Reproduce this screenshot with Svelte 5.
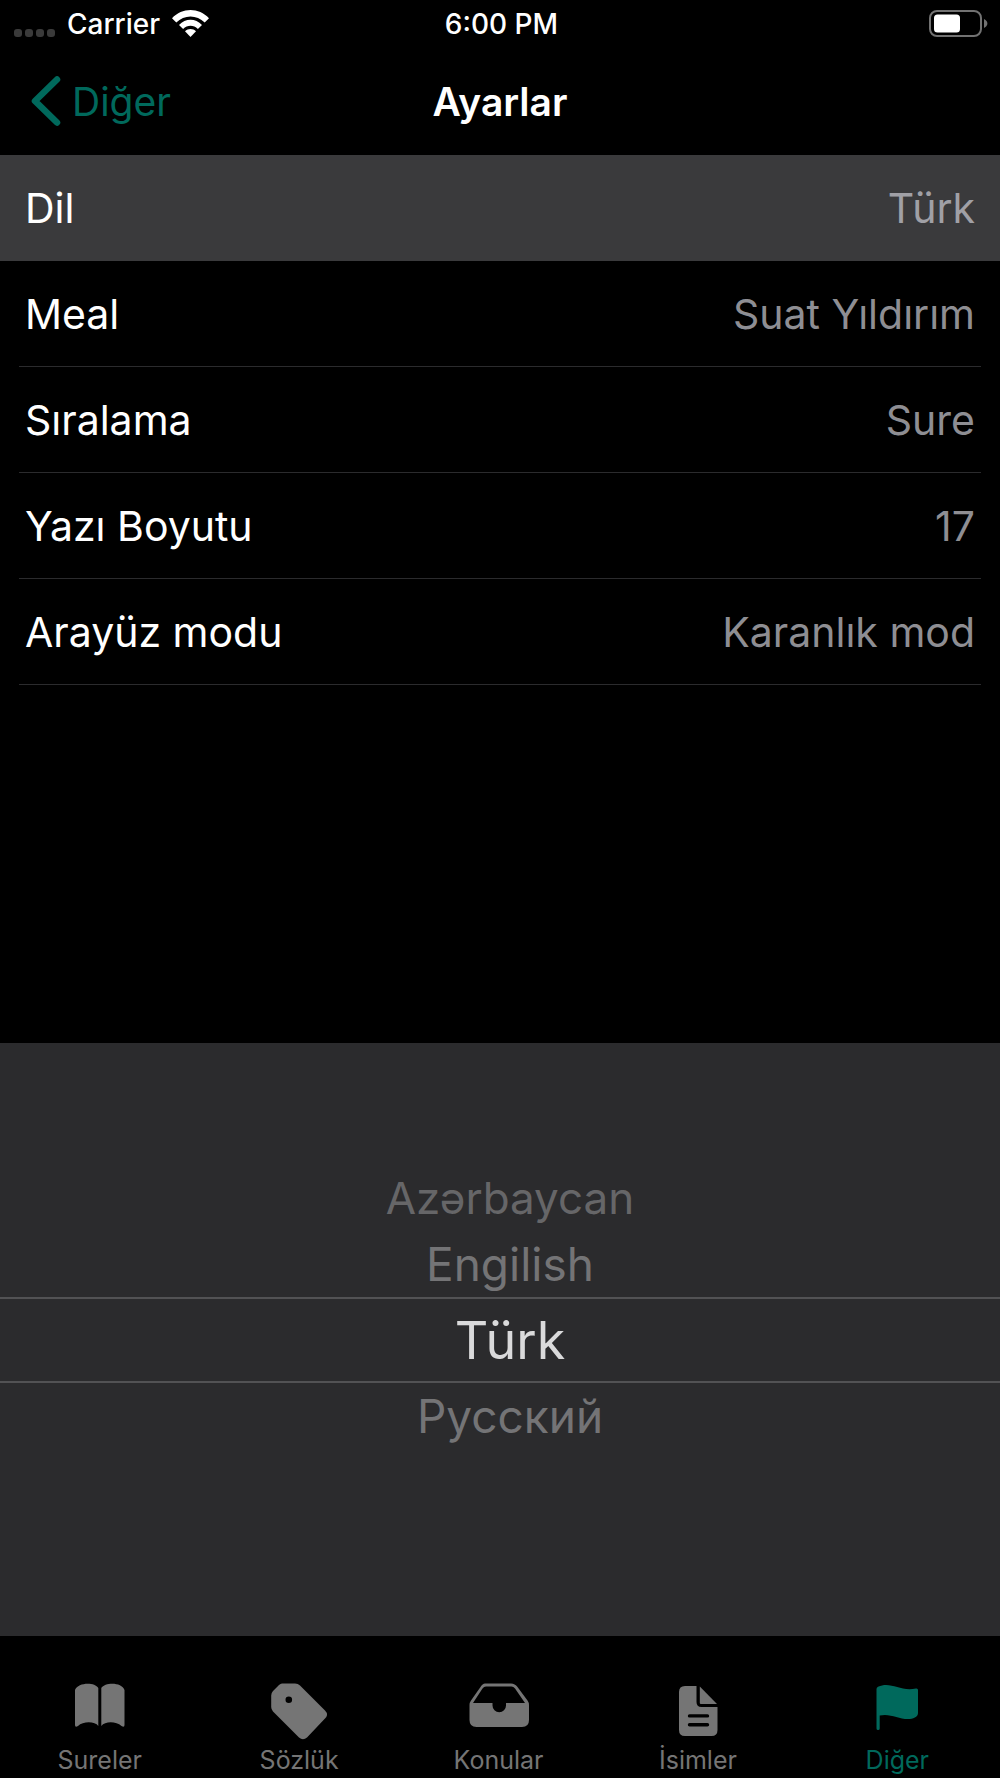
<script lang="ts">
  const languages = ['Azərbaycan', 'Engilish', 'Türk', 'Русский'];
  const tabs = ['Sureler', 'Sözlük', 'Konular', 'İsimler', 'Diğer'];

  let language = $state(2);
  let activeRow = $state(0);
  let activeTab = $state(4);

  let settings = $derived([
    {label: 'Dil', value: languages[language]},
    {label: 'Meal', value: 'Suat Yıldırım'},
    {label: 'Sıralama', value: 'Sure'},
    {label: 'Yazı Boyutu', value: '17'},
    {label: 'Arayüz modu', value: 'Karanlık mod'}
  ]);
</script>

<div class="screen">
  <div class="status-bar">
    <div class="carrier">
      <span class="signal"><i></i><i></i><i></i><i></i></span>
      <span>Carrier</span>
      <svg width="37" height="27" viewBox="0 0 37 27" aria-hidden="true">
        <path d="M0 8.3C10-2.7 27-2.7 37 8.3L32.7 12.6C24.8 4.5 12.2 4.5 4.3 12.6Z" />
        <path d="M7 15C13.5 8 23.5 8 30 15L25.9 18.9C21.6 14.7 15.4 14.7 11.1 18.9Z" />
        <path d="M13 21.3C16 18.2 21 18.2 24 21.3L18.5 27Z" />
      </svg>
    </div>
    <span class="time">6:00 PM</span>
    <svg class="battery" width="60" height="27" viewBox="0 0 60 27" aria-hidden="true">
      <rect x="1" y="1" width="51" height="25" rx="7" fill="none" stroke="#727272" stroke-width="2" />
      <rect x="5" y="4.5" width="26" height="18" rx="3.5" />
      <path d="M55 9C59.5 11 59.5 16 55 18Z" fill="#727272" />
    </svg>
  </div>

  <header>
    <a class="back" href="#more">
      <svg width="31" height="50" viewBox="0 0 31 50" aria-hidden="true">
        <path
          d="M27 3.5 5 25 27 46.5"
          fill="none"
          stroke="currentColor"
          stroke-width="6.5"
          stroke-linecap="round"
          stroke-linejoin="round" />
      </svg>
      <span>Diğer</span>
    </a>
    <h1>Ayarlar</h1>
  </header>

  <main>
    {#each settings as row, index}
      <button
        class="row"
        class:selected={index === activeRow}
        onclick={() => (activeRow = index)}>
        <span class="row-content">
          <span>{row.label}</span>
          <span class="value">{row.value}</span>
        </span>
      </button>
    {/each}
  </main>

  <div class="picker" role="listbox" aria-label="Dil">
    {#each languages as name, index}
      <button
        class="option"
        class:current={index === language}
        class:far={Math.abs(index - language) > 1}
        role="option"
        aria-selected={index === language}
        onclick={() => (language = index)}>
        {name}
      </button>
    {/each}
  </div>

  <nav>
    {#each tabs as tab, index}
      <button
        class="tab"
        class:active={index === activeTab}
        onclick={() => (activeTab = index)}>
        <svg width="64" height="60" viewBox="0 0 64 60" aria-hidden="true">
          {#if index === 0}
            <path d="M7 8C10 0 27 0 30.3 6V44C27 39 15 39 10 44Q7 46 7 43Z" />
            <path d="M33.3 6C37 0 54 0 56.5 8V43Q56.5 46 53.5 44C48 39 37 39 33.3 44Z" />
          {:else if index === 1}
            <path
              fill-rule="evenodd"
              d="M15 1.5H28Q31 1.5 33 3.5L58 28.5Q62 32.5 58 36.5L40 55.5Q36 59 32 55.5L6 29.5Q4.2 27.5 4.2 25V13.5Q4.2 11 6 9L12 3Q13.500 1.5 15 1.5ZM21.8 14.5A3.3 3.3 0 1 0 21.8 21.1 3.3 3.3 0 1 0 21.8 14.5Z" />
          {:else if index === 2}
            <path
              fill-rule="evenodd"
              d="M18 1.5H44Q48 1.5 50.5 5L60.5 18.5Q62 20.5 62 23V38Q62 45 55 45H9.5Q2.5 45 2.5 38V23Q2.5 20.5 4 18.5L13.5 5Q15.5 1.5 18 1.5ZM19 4.5Q16.8 4.5 15.5 6.5L6 21H25.5V23.5A6.7 6.7 0 0 0 39 23.5V21H58L48 6.500Q46.5 4.5 44.5 4.5Z" />
          {:else if index === 3}
            <path
              fill-rule="evenodd"
              d="M19 4H30.5V20Q30.5 25 35.5 25H51.5V48Q51.5 54 45.5 54H19Q13 54 13 48V10Q13 4 19 4ZM23.5 32.2A1.7 1.7 0 0 0 23.5 35.6H41.5A1.7 1.7 0 0 0 41.5 32.2ZM23.5 41A1.7 1.7 0 0 0 23.5 44.4H41.5A1.7 1.7 0 0 0 41.5 41Z" />
            <path d="M33.8 4.5 51 22H34.8Q33.8 22 33.8 21Z" />
          {:else}
            <path
              d="M11.5 7Q11.5 5.5 13 4.8C26-1 35 10 51 6.5Q53 6.2 53 8V31C53 35 48 37 43 37C33 37 25 31 14.7 33.5V46.5A1.6 1.6 0 0 1 11.5 46.5Z" />
          {/if}
        </svg>
        <span>{tab}</span>
      </button>
    {/each}
  </nav>
</div>

<style>
  :global(body) {
    background: #000;
    margin: 0;
  }

  .screen {
    --green: #00695c;
    --gray: #8e8e93;
    --tab-gray: #757575;
    --panel: #2b2b2d;

    display: flex;
    flex-direction: column;
    min-height: 100vh;

    background: #000;
    color: #fff;
    font-family: Inter, 'Liberation Sans', sans-serif;
  }

  button {
    background: none;
    border: none;
    color: inherit;
    font: inherit;
    margin: 0;
    padding: 0;
  }

  svg {
    display: block;
    fill: currentColor;
  }

  .status-bar {
    display: grid;
    grid-template-columns: 1fr auto 1fr;
    align-items: center;

    box-sizing: border-box;
    font-size: 28px;
    font-weight: 500;
    height: 47px;
    padding: 0 11px 0 14px;
  }

  .carrier {
    display: flex;
    align-items: center;
    gap: 12px;
  }

  .signal {
    display: flex;
    gap: 3px;
    padding-top: 18px;
  }

  .signal i {
    background: #3a3a3a;
    border-radius: 3px;
    height: 8px;
    width: 8px;
  }

  .battery {
    justify-self: end;
  }

  header {
    display: grid;
    grid-template-columns: 1fr auto 1fr;
    align-items: center;

    height: 108px;
    padding: 0 30px;
  }

  .back {
    display: flex;
    align-items: center;
    gap: 11px;

    color: var(--green);
    font-size: 39px;
    text-decoration: none;
  }

  h1 {
    font-size: 39px;
    font-weight: 600;
    margin: 0;
  }

  main {
    flex: 1;
  }

  .row {
    display: block;
    font-size: 41px;
    height: 106px;
    padding: 0 19px;
    text-align: left;
    width: 100%;
  }

  .row-content {
    display: flex;
    align-items: center;
    justify-content: space-between;

    border-bottom: 1px solid #2b2b2d;
    box-sizing: border-box;
    height: 100%;
    padding: 0 6px;
  }

  .value {
    color: var(--gray);
  }

  .selected {
    background: #3a3a3c;
  }

  .selected .row-content {
    border-color: transparent;
  }

  .selected .value {
    color: #a0a0a6;
  }

  .picker {
    display: flex;
    flex-direction: column;

    background: var(--panel);
    box-sizing: border-box;
    min-height: 593px;
    padding-top: 122px;
  }

  .option {
    border: solid transparent;
    border-width: 2px 0;
    box-sizing: border-box;
    color: #747476;
    font-size: 46px;
    height: 66px;
    padding-left: 20px;
  }

  .far {
    color: #666668;
    font-size: 44px;
  }

  .current {
    border-color: #525254;
    color: #dadadb;
    font-size: 52px;
    height: 86px;
  }

  nav {
    display: flex;
    height: 142px;
    padding-right: 3px;
  }

  .tab {
    display: flex;
    flex: 1;
    flex-direction: column;
    align-items: center;
    justify-content: flex-end;

    color: var(--tab-gray);
    font-size: 25px;
    line-height: 36px;
  }

  .active {
    color: var(--green);
  }
</style>
